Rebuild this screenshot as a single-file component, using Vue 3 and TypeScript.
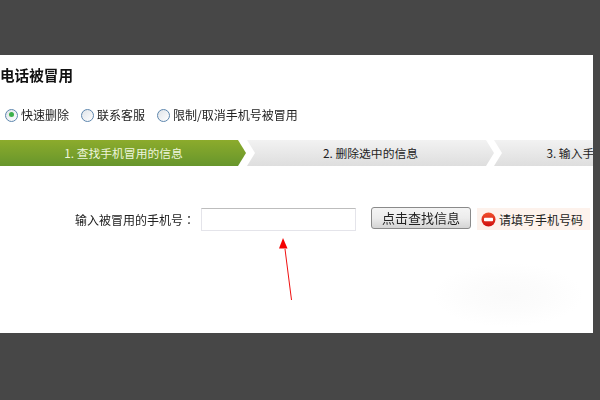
<script setup lang="ts">
const radios = [
  { label: '快速删除', on: true },
  { label: '联系客服', on: false },
  { label: '限制/取消手机号被冒用', on: false },
]
const steps = ['1. 查找手机冒用的信息', '2. 删除选中的信息', '3. 输入手机号码和校验信息']
</script>

<template>
  <div class="page">
    <section class="panel">
      <div class="glow"></div>
      <h1 class="title">电话被冒用</h1>
      <div class="radios">
        <label v-for="r in radios" :key="r.label" class="radio">
          <span class="dot" :class="{ on: r.on }"></span>
          <span>{{ r.label }}</span>
        </label>
      </div>
      <div class="steps">
        <div v-for="(s, i) in steps" :key="s" class="step" :class="{ active: i === 0 }">
          <span>{{ s }}</span>
        </div>
      </div>
      <div class="form">
        <span class="label">输入被冒用的手机号<span class="colon">：</span></span>
        <input class="phone" type="text" />
        <button class="find" type="button">点击查找信息</button>
        <span class="error">
          <svg width="15" height="15" viewBox="0 0 15 15">
            <defs>
              <linearGradient id="stop" x1="0" y1="0" x2="0" y2="1">
                <stop offset="0" stop-color="#f0502c" />
                <stop offset="1" stop-color="#d01010" />
              </linearGradient>
            </defs>
            <circle cx="7.5" cy="7.5" r="7" fill="url(#stop)" />
            <rect x="3" y="5.8" width="9" height="3.4" rx="0.8" fill="#fff" />
          </svg>
          <span>请填写手机号码</span>
        </span>
      </div>
      <svg class="arrow" width="20" height="66" viewBox="0 0 20 66">
        <line x1="14.5" y1="63" x2="8" y2="12" stroke="#f01010" stroke-width="1" />
        <polygon points="6,1 2,11.5 10.5,11.5" fill="#f40000" />
      </svg>
    </section>
  </div>
</template>

<style>
html, body { margin: 0; background: #474747; }
</style>

<style scoped>
.page {
  width: 600px;
  height: 400px;
  padding-top: 55px;
  box-sizing: border-box;
  background: #474747;
  overflow: hidden;
  font-family: "Noto Sans CJK SC", "Liberation Sans", sans-serif;
}
.panel {
  position: relative;
  width: 593px;
  height: 278px;
  background: #fff;
  overflow: hidden;
  color: #222;
  font-size: 12px;
}
.glow {
  position: absolute;
  left: 433px;
  top: 208px;
  width: 150px;
  height: 64px;
  background: radial-gradient(ellipse farthest-side at center, #fafafa 0%, #fcfcfc 50%, #fff 100%);
}
.title {
  position: relative;
  margin: 0;
  height: 44px;
  padding-top: 11px;
  box-sizing: border-box;
  font-size: 14.6px;
  line-height: 18px;
  font-weight: 700;
  color: #111;
  filter: blur(0.3px);
}
.radios {
  position: relative;
  display: flex;
  gap: 12px;
  height: 41px;
  padding: 7px 0 0 5px;
  box-sizing: border-box;
  filter: blur(0.3px);
}
.radio {
  display: flex;
  align-items: center;
  gap: 3px;
  height: 18px;
  line-height: 18px;
  color: #222;
}
.dot {
  position: relative;
  width: 13px;
  height: 13px;
  box-sizing: border-box;
  border: 1.5px solid #5d86ad;
  border-radius: 50%;
  background: linear-gradient(135deg, #dfe3e8, #fff);
}
.dot.on::after {
  content: "";
  position: absolute;
  left: 2.5px;
  top: 2.5px;
  width: 5px;
  height: 5px;
  border-radius: 50%;
  background: #3cb04a;
}
.steps {
  position: relative;
  display: flex;
  height: 26px;
}
.step {
  flex: none;
  width: 247px;
  height: 26px;
  display: flex;
  align-items: center;
  justify-content: center;
  line-height: 26px;
  font-size: 11.8px;
  color: #222;
  background: linear-gradient(#f2f2f2, #dedede);
  clip-path: polygon(0 0, 239px 0, 247px 13px, 239px 26px, 0 26px, 8px 13px);
  white-space: nowrap;
}
.step.active {
  clip-path: polygon(0 0, 238px 0, 246px 13px, 238px 26px, 0 26px);
  background: linear-gradient(#8cab2c, #67962c);
  color: #eef5dc;
}
.form {
  position: relative;
  display: flex;
  align-items: center;
  height: 24px;
  margin-top: 41px;
  padding-left: 75px;
}
.label {
  width: 126px;
  flex: none;
  color: #222;
  white-space: nowrap;
  filter: blur(0.3px);
}
.colon {
  font-family: "Noto Sans CJK TC", sans-serif;
}
.phone {
  width: 155px;
  height: 23px;
  flex: none;
  box-sizing: border-box;
  margin: 0;
  padding: 0;
  border: 1px solid #e4e4ea;
  border-top-color: #bdbdbd;
  background: #fff;
  outline: none;
}
.find {
  flex: none;
  width: 100px;
  height: 22px;
  margin: -3px 0 0 15px;
  padding: 0;
  border: 1px solid #8a8a8a;
  border-radius: 3px;
  background: linear-gradient(#f4f4f4 0%, #ececec 50%, #d4d4d4 100%);
  font: inherit;
  font-size: 13px;
  color: #222;
  filter: blur(0.3px);
}
.error {
  flex: none;
  display: flex;
  align-items: center;
  gap: 3px;
  width: 113px;
  height: 22px;
  margin-left: 6px;
  padding-left: 4px;
  box-sizing: border-box;
  background: #fdf2ec;
  color: #222;
  white-space: nowrap;
}
.arrow {
  position: absolute;
  left: 277px;
  top: 182px;
}
</style>
